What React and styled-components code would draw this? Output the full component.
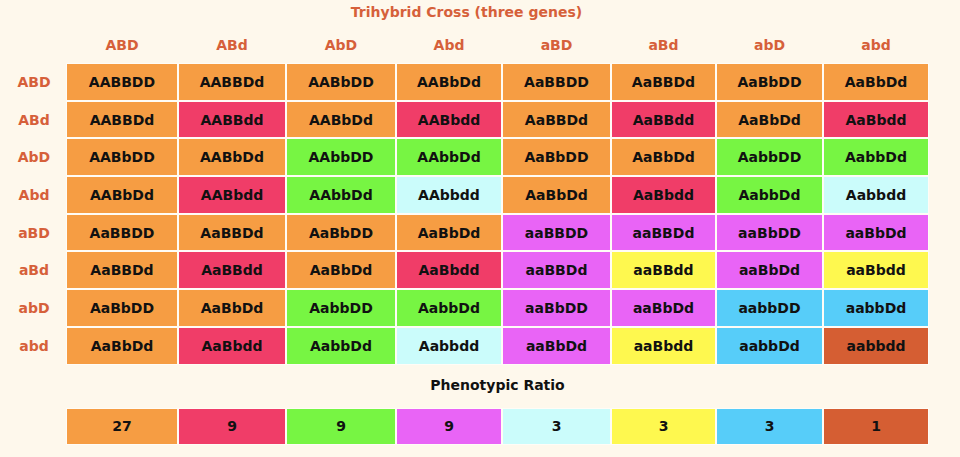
import React from 'react'
import styled, { createGlobalStyle } from 'styled-components'

const GlobalStyle = createGlobalStyle`
  body { margin: 0; background: #fef8ec; font-family: "DejaVu Sans", Verdana, sans-serif; }
`

const Page = styled.div`
  width: 925px;
  padding: 4px 0 0 4px;
`
const Title = styled.div`
  text-align: center;
  color: #d6603a;
  font-weight: bold;
  font-size: 14px;
  line-height: 17px;
  margin-bottom: 8px;
`
const Grid = styled.div`
  display: grid;
  grid-template-columns: 62px 112px 108px 110px 106px 109px 105px 107px 106px;
`
const HeadLabel = styled.div`
  height: 34px;
  display: flex;
  align-items: center;
  justify-content: center;
  padding-bottom: 2px;
  box-sizing: border-box;
  color: #d6603a;
  font-weight: bold;
  font-size: 14px;
`
const RowLabel = styled(HeadLabel)`
  height: 37.7px;
  padding-bottom: 0;
  padding-right: 2px;
`
const Cell = styled.div`
  height: 37.7px;
  box-sizing: border-box;
  border: 1px solid #fffcf6;
  background: ${p => p.$bg};
  display: flex;
  align-items: center;
  justify-content: center;
  font-weight: bold;
  font-size: 14px;
  color: #111;
`
const Subtitle = styled.div`
  margin: 12px 0 14px 62px;
  text-align: center;
  font-weight: bold;
  font-size: 14px;
  line-height: 17px;
  color: #111;
`

const COLORS = {
  ABD: '#f69d43',
  ABd: '#f03d68',
  AbD: '#77f543',
  Abd: '#cbfcfb',
  aBD: '#e964f6',
  aBd: '#fef84f',
  abD: '#57cdf9',
  abd: '#d55e33',
}

const gametes = ['ABD', 'ABd', 'AbD', 'Abd', 'aBD', 'aBd', 'abD', 'abd']

function cross(a, b) {
  let geno = ''
  let pheno = ''
  for (let i = 0; i < 3; i++) {
    const pair = [a[i], b[i]].sort((x, y) => (x === x.toUpperCase() ? -1 : 1) - (y === y.toUpperCase() ? -1 : 1))
    geno += pair.join('')
    pheno += pair[0]
  }
  return { geno, pheno }
}

const ratio = [
  ['27', 'ABD'], ['9', 'ABd'], ['9', 'AbD'], ['9', 'aBD'],
  ['3', 'Abd'], ['3', 'aBd'], ['3', 'abD'], ['1', 'abd'],
]

export default function App() {
  return (
    <Page>
      <GlobalStyle />
      <Title>Trihybrid Cross (three genes)</Title>
      <Grid>
        <HeadLabel />
        {gametes.map(g => <HeadLabel key={g}>{g}</HeadLabel>)}
        {gametes.map(r => (
          <React.Fragment key={r}>
            <RowLabel>{r}</RowLabel>
            {gametes.map(c => {
              const { geno, pheno } = cross(r, c)
              return <Cell key={c} $bg={COLORS[pheno]}>{geno}</Cell>
            })}
          </React.Fragment>
        ))}
      </Grid>
      <Subtitle>Phenotypic Ratio</Subtitle>
      <Grid>
        <div />
        {ratio.map(([n, p]) => <Cell key={p} $bg={COLORS[p]}>{n}</Cell>)}
      </Grid>
    </Page>
  )
}
